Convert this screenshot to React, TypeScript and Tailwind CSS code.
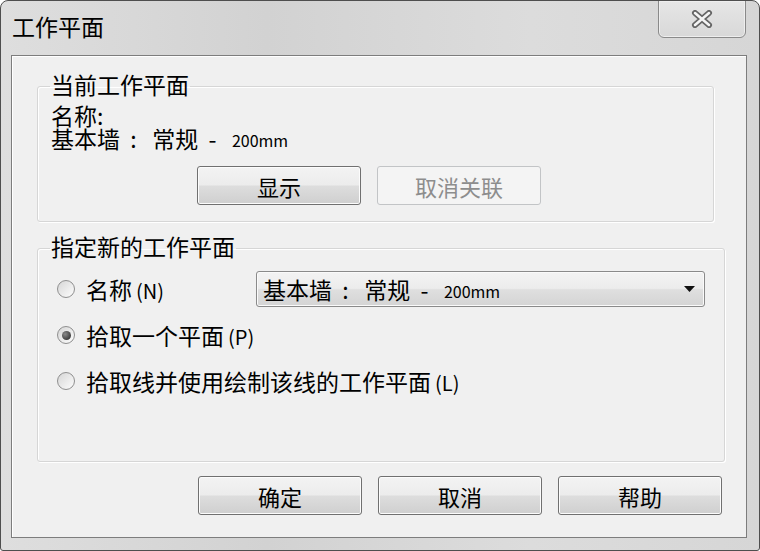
import React from "react";

function Btn({ label, disabled }: { label: string; disabled?: boolean }) {
  return (
    <button
      className={
        "flex h-[39px] w-[164px] items-center justify-center rounded-[3px] border text-[22px] leading-none " +
        (disabled
          ? "border-[#c2c4c6] bg-[#f4f4f4] text-[#8d8d8d]"
          : "border-[#707070] bg-[linear-gradient(#f3f3f3_0%,#ececec_48%,#dddddd_52%,#cfcfcf_100%)] text-black shadow-[inset_0_0_0_1px_#fcfcfc]")
      }
    >
      {label}
    </button>
  );
}

function Radio({ checked }: { checked?: boolean }) {
  return (
    <span className="flex h-[18px] w-[18px] shrink-0 items-center justify-center rounded-full border border-[#8f8f8f] bg-[linear-gradient(135deg,#d6d6d6,#fdfdfd)]">
      {checked && (
        <span className="h-[9px] w-[9px] rounded-full bg-[radial-gradient(circle_at_35%_35%,#8a8a8a,#1f1f1f)]" />
      )}
    </span>
  );
}

function WallType() {
  return (
    <span className="whitespace-pre">
      {"基本墙  :   常规  -   "}
      <span className="relative -top-[1px] text-[16px] leading-none">200mm</span>
    </span>
  );
}

function Key({ k }: { k: string }) {
  return <span className="ml-[4px] text-[20px] leading-none">({k})</span>;
}

export default function App() {
  return (
    <div className="flex h-[551px] w-[760px] flex-col overflow-hidden rounded-t-[8px] rounded-b-[3px] border border-[#4e4e4e] bg-[linear-gradient(90deg,#dedede,#d2d2d2_35%,#dcdcdc_70%,#d6d6d6)] font-['Noto_Sans_CJK_SC','Liberation_Sans',sans-serif] text-black">
      {/* title bar */}
      <div className="flex h-[54px] shrink-0 items-start justify-between pl-[11px] pr-[13px]">
        <div className="mt-[12px] text-[23px] leading-[26px]">工作平面</div>
        <div className="-mt-[1px] flex h-[38px] w-[88px] items-center justify-center rounded-b-[6px] border border-[#8a8a8a] bg-[linear-gradient(#e6e6e6,#d8d8d8)] shadow-[inset_0_0_0_1px_#eeeeee]">
          <svg width="24" height="18" viewBox="0 0 24 18">
            <path d="M5 3 L19 15 M19 3 L5 15" stroke="#666" strokeWidth="6" strokeLinecap="round" fill="none" />
            <path d="M5 3 L19 15 M19 3 L5 15" stroke="#f4f4f4" strokeWidth="2.5" strokeLinecap="round" fill="none" />
          </svg>
        </div>
      </div>

      {/* client area */}
      <div className="ml-[10px] mr-[12px] mb-[12px] flex flex-1 flex-col border border-[#7d7d7d] bg-[#f0f0f0] pl-[25px] pr-[24px] shadow-[inset_1px_1px_0_#ffffff]">
        <fieldset className="mt-[17px] w-[677px] rounded-[3px] border border-[#d6d6d6] pl-[12px] pr-[12px] pb-[16px] shadow-[inset_1px_1px_0_#ffffff,1px_1px_0_#ffffff]">
          <legend className="px-[1px] text-[23px] leading-[26px]">
            <span className="relative -top-[2px]">当前工作平面</span>
          </legend>
          <div className="pl-[1px] pt-[5px] text-[23px]">
            <div className="h-[23px] leading-[23px]">名称:</div>
            <div className="h-[23px] leading-[23px]">
              <WallType />
            </div>
          </div>
          <div className="mt-[16px] flex gap-[16px] pl-[147px]">
            <Btn label="显示" />
            <Btn label="取消关联" disabled />
          </div>
        </fieldset>

        <fieldset className="mt-[13px] h-[227px] w-[688px] rounded-[3px] border border-[#d6d6d6] pl-[12px] pr-[12px] shadow-[inset_1px_1px_0_#ffffff,1px_1px_0_#ffffff]">
          <legend className="px-[1px] text-[23px] leading-[26px]">
            <span className="relative -top-[2px]">指定新的工作平面</span>
          </legend>
          <div className="flex flex-col gap-[10px] pt-[10px] text-[23px]">
            <div className="flex h-[36px] items-center pl-[7px] pr-[7px]">
              <Radio />
              <span className="ml-[11px]">
                名称<Key k="N" />
              </span>
              <div className="ml-auto flex h-[36px] w-[449px] items-center rounded-[3px] border border-[#8a8a8a] bg-[linear-gradient(#f3f3f3_0%,#ececec_48%,#dfdfdf_52%,#d4d4d4_100%)] pl-[6px] pr-[9px] shadow-[inset_0_0_0_1px_#fafafa]">
                <span className="flex-1">
                  <WallType />
                </span>
                <svg width="11" height="6" viewBox="0 0 11 6">
                  <path d="M0 0 H11 L5.5 6 Z" fill="#111" />
                </svg>
              </div>
            </div>
            <div className="flex h-[36px] items-center pl-[7px]">
              <Radio checked />
              <span className="ml-[11px]">
                拾取一个平面<Key k="P" />
              </span>
            </div>
            <div className="flex h-[36px] items-center pl-[7px]">
              <Radio />
              <span className="ml-[11px]">
                拾取线并使用绘制该线的工作平面<Key k="L" />
              </span>
            </div>
          </div>
        </fieldset>

        <div className="mt-[14px] flex justify-end gap-[16px]">
          <Btn label="确定" />
          <Btn label="取消" />
          <Btn label="帮助" />
        </div>
      </div>
    </div>
  );
}
